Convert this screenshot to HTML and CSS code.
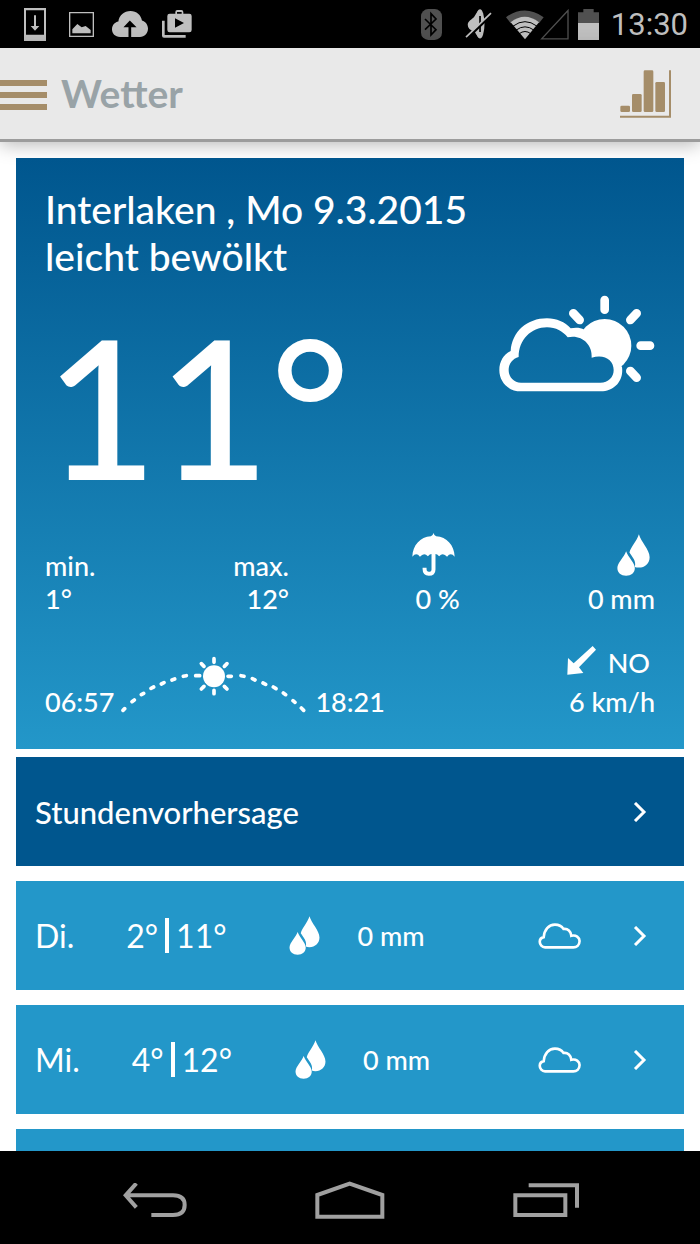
FILE: index.html
```html
<!DOCTYPE html>
<html lang="de">
<head>
<meta charset="utf-8">
<meta name="viewport" content="width=device-width, initial-scale=1">
<title>Wetter</title>
<link rel="stylesheet" href="styles.css">
</head>
<body>
<svg class="defs" width="0" height="0" aria-hidden="true">
  <symbol id="drops" viewBox="743 43 98 125">
    <path d="M808 44C814 66 840 90 840 112C840 130 826 143 808 143C803 143 799 142 796 141C801 124 789 112 780 98C784 82 802 64 808 44Z"/>
    <path d="M770 94C776 112 796 128 796 144C796 158 785 167 770 167C755 167 744 158 744 144C744 128 764 112 770 94Z"/>
  </symbol>
  <symbol id="cloud" viewBox="565 162 130 79">
    <path d="M582 205C584 182 597 167 616 167C628 167 637 172 642 180C655 178 665 187 666 201C680 197 691 206 691 217C691 229 682 236 672 236H586C577 236 570 228 570 219C570 212 574 207 582 205Z" fill="none" stroke="#fff" stroke-width="8"/>
  </symbol>
  <symbol id="chevron" viewBox="0 0 14 20">
    <path d="M2 1L11 10L2 19" fill="none" stroke="#fff" stroke-width="3"/>
  </symbol>
</svg>

<div class="statusbar">
  <div class="notifications">
    <svg width="22" height="33" viewBox="72 24 66 99"><path d="M72 24H138V123H72ZM78 31V104H132V31Z" fill-rule="evenodd"/><path d="M102 46H108V78H118L105 92L92 78H102Z"/></svg>
    <svg width="25" height="25" viewBox="207 36 75 75"><path d="M207 36H282V111H207ZM211 40V107H278V40Z" fill-rule="evenodd"/><path d="M217 100V88L232 72L245 82L257 78L272 90V100Z"/></svg>
    <svg width="36" height="26" viewBox="332 36 107 77"><path d="M356 113C341 113 332 102 332 90C332 78 340 69 351 67C353 49 368 36 387 36C405 36 418 48 421 64C432 67 439 77 439 88C439 102 429 113 415 113H389V84H405L385 64L366 84H381V113Z"/></svg>
    <svg width="30" height="28" viewBox="481 34 90 84"><path d="M481 66H489V109H552V117H487Q481 117 481 111Z"/><path d="M504 45H521V40Q521 34 527 34H539Q545 34 545 40V45H563Q570 45 570 52V94Q570 101 563 101H504Q497 101 497 94V52Q497 45 504 45ZM526 45H540V40H526ZM520 59V87L547 73Z" fill-rule="evenodd"/></svg>
  </div>
  <div class="system">
    <svg width="21" height="31" viewBox="65 24 63 93"><rect x="65" y="24" width="63" height="93" rx="22" fill="#505050"/><path d="M77 54L110 86L95 102V38L110 54L77 86" fill="none" stroke="#000" stroke-width="5"/></svg>
    <svg class="mute" width="27" height="30" viewBox="198 27 79 87"><path d="M206 73C206 60 219 57 225 49L238 28V112L226 93Q206 88 206 73Z"/><ellipse cx="242" cy="70" rx="13" ry="43"/><path d="M242 47V94" stroke="#000" stroke-width="5"/><path d="M201 115L274 45" stroke="#000" stroke-width="8"/><path d="M201 109L274 39" stroke="#bfbfbf" stroke-width="5"/></svg>
    <svg width="63" height="31" viewBox="318 24 189 92"><path d="M318 48Q374 8 431 48L417 66Q374 36 332 66Z" fill="#505050"/><path d="M332 63Q374 30 417 63L375 114Z"/><path d="M339 75Q375 48 411 75M348 87Q375 67 402 87M357 98Q375 84 393 98" fill="none" stroke="#000" stroke-width="3"/><path d="M425 113H504V28Z" fill="none" stroke="#505050" stroke-width="4"/></svg>
    <svg class="battery" width="21" height="31" viewBox="534 24 63 93"><path d="M534 34H550V24H581V34H597V70H534Z" fill="#505050"/><path d="M534 66H597V117H534Z"/></svg>
    <time class="clock">13:30</time>
  </div>
</div>

<header class="appbar">
  <button class="menu" type="button" aria-label="Menü"><span></span><span></span><span></span></button>
  <h1 class="title">Wetter</h1>
  <button type="button" aria-label="Diagramm">
    <svg class="chart" width="51" height="48" viewBox="660 213 153 144"><rect x="661" y="320" width="29" height="19" rx="4"/><rect x="696" y="285" width="29" height="54" rx="4"/><rect x="731" y="214" width="29" height="125" rx="4"/><rect x="766" y="249" width="29" height="90" rx="4"/><path d="M807 214H813V356H660V350H807Z"/></svg>
  </button>
</header>

<main class="content">
  <section class="current">
    <h2 class="place">Interlaken , Mo 9.3.2015<br>leicht bewölkt</h2>
    <div class="hero">
      <div class="temperature">11°</div>
      <svg width="156" height="97" viewBox="59 46 468 291" role="img" aria-label="leicht bewölkt">
        <mask id="cloud-hole" maskUnits="userSpaceOnUse" x="59" y="46" width="468" height="291">
          <rect x="59" y="46" width="468" height="291" fill="#fff"/>
          <path fill="#000" d="M118 232C118 181 155 143 203 143C229 143 251 155 265 173C304 163 340 192 337 234C375 222 403 241 403 271C403 293 387 309 363 309H125C104 309 88 293 88 271C88 252 100 237 118 232Z"/>
        </mask>
        <g mask="url(#cloud-hole)"><circle cx="376" cy="198" r="80"/><path d="M94 214C98 156 143 116 203 116C232 116 257 127 274 146C290 143 303 144 315 150L376 198L428 262C434 305 403 335 365 335H125C85 335 60 305 60 272C60 245 73 225 94 214Z"/></g>
        <path d="M376 61V90M282 101L301 121M472 101L453 121M484 198H512M453 274L472 294" stroke="#fff" stroke-width="26" stroke-linecap="round"/>
      </svg>
    </div>
    <div class="stats">
      <div class="stat"><span>min.</span><span>1°</span></div>
      <div class="stat"><span>max.</span><span>12°</span></div>
      <div class="stat">
        <svg width="43" height="43" viewBox="129 39 130 130" role="img" aria-label="Regenrisiko"><path d="M194 39Q196 47 202 49C234 51 257 76 258 111Q246 96 235 111Q223 96 211 109Q203 100 194 104Q185 100 177 109Q165 96 153 111Q142 96 130 111C131 76 154 51 186 49Q192 47 194 39Z"/><path d="M194 100V149Q194 162 180 162Q167 162 167 148V144" fill="none" stroke="#fff" stroke-width="12"/></svg>
        <span>0 %</span>
      </div>
      <div class="stat">
        <svg width="33" height="42" role="img" aria-label="Niederschlag"><use href="#drops"/></svg>
        <span>0 mm</span>
      </div>
    </div>
    <div class="sky">
      <div class="sun">
        <span>06:57</span>
        <svg width="187" height="57" viewBox="271 408 561 171" aria-hidden="true"><path d="M280 571L285 566M307 545L314 540M335 524L342 520M364 505L372 501M395 492L403 488M427 480L435 477M461 469L470 467M498 467H510M595 469H605M634 467L643 469M668 476L676 480M700 489L708 493M731 501L739 506M761 519L768 524M790 542L796 547M815 564L822 571" fill="none" stroke="#fff" stroke-width="11" stroke-linecap="round"/><path d="M553 416V427M553 511V521M515 431L523 439M592 431L584 439M515 507L523 499M592 507L584 499" stroke="#fff" stroke-width="11" stroke-linecap="round"/><circle cx="553" cy="469" r="33"/></svg>
        <span>18:21</span>
      </div>
      <div class="wind">
        <span class="direction"><svg width="29" height="29" viewBox="584 375 87 87" aria-hidden="true"><path d="M661 375L671 386L620 439L633 456L585 461L587 411L604 427Z"/></svg>NO</span>
        <span>6 km/h</span>
      </div>
    </div>
  </section>

  <a class="row hourly" href="#stunden">Stundenvorhersage<svg class="chevron" width="14" height="20" aria-hidden="true"><use href="#chevron"/></svg></a>

  <div class="days">
    <a class="row" href="#di">
      <span>Di.</span>
      <span class="range"><span>2°</span><span class="bar"></span><span>11°</span></span>
      <svg class="drops" width="31" height="39" aria-hidden="true"><use href="#drops"/></svg>
      <span class="rain">0 mm</span>
      <svg class="cloud" width="43" height="26" aria-hidden="true"><use href="#cloud"/></svg>
      <svg class="chevron" width="14" height="20" aria-hidden="true"><use href="#chevron"/></svg>
    </a>
    <a class="row" href="#mi">
      <span>Mi.</span>
      <span class="range"><span>4°</span><span class="bar"></span><span>12°</span></span>
      <svg class="drops" width="31" height="39" aria-hidden="true"><use href="#drops"/></svg>
      <span class="rain">0 mm</span>
      <svg class="cloud" width="43" height="26" aria-hidden="true"><use href="#cloud"/></svg>
      <svg class="chevron" width="14" height="20" aria-hidden="true"><use href="#chevron"/></svg>
    </a>
    <div class="row"></div>
  </div>
</main>

<nav class="navbar">
  <button type="button" aria-label="Zurück"><svg width="64" height="34" viewBox="98 189 192 102"><path d="M104 226H248Q283 226 283 255Q283 285 248 285H183M138 190L106 226L138 262" fill="none" stroke="#a0a0a0" stroke-width="12"/></svg></button>
  <button type="button" aria-label="Startseite"><svg width="70" height="38" viewBox="665 178 210 114"><path d="M672 285V220L769 186L867 220V285Z" fill="none" stroke="#a0a0a0" stroke-width="12"/></svg></button>
  <button type="button" aria-label="Letzte Apps"><svg width="66" height="34" viewBox="1251 189 198 102"><path d="M1258 226H1408V285H1258ZM1298 196H1443V263" fill="none" stroke="#a0a0a0" stroke-width="12"/></svg></button>
</nav>
</body>
</html>
```
FILE: styles.css
```css
* {
  box-sizing: border-box;
}

body {
  margin: 0;
  height: 100vh;
  display: flex;
  flex-direction: column;
  overflow: hidden;
  background: #fff;
  color: #fff;
  font-family: Lato, "Liberation Sans", sans-serif;
  font-size: 27px;
  line-height: 33px;
  font-weight: 500;
}

svg {
  display: block;
  flex: none;
  fill: #fff;
}

.defs {
  position: absolute;
}

button {
  padding: 0;
  border: 0;
  background: none;
  cursor: pointer;
}

.statusbar {
  flex: none;
  height: 48px;
  padding: 0 12px 0 24px;
  display: flex;
  align-items: center;
  justify-content: space-between;
  background: #000;
}

.statusbar svg {
  fill: #bfbfbf;
}

.notifications {
  display: flex;
  align-items: center;
  gap: 18px;
}

.notifications svg:nth-child(2) {
  margin-left: 5px;
}

.notifications svg:nth-child(4) {
  margin-left: -4px;
}

.system {
  display: flex;
  align-items: center;
}

.mute {
  margin: 0 14px 0 23px;
}

.battery {
  margin: 0 12px 0 9px;
}

.clock {
  padding-top: 2px;
  color: #bfbfbf;
  font: 400 31px/46px Roboto, sans-serif;
}

.appbar {
  flex: none;
  height: 94px;
  padding-right: 29px;
  display: flex;
  align-items: center;
  background: #e9e9e9;
  border-bottom: 3px solid #9c9c9c;
  box-shadow: 0 2px 18px rgba(0, 0, 0, 0.3);
}

.menu {
  width: 47px;
  padding-top: 2px;
  display: grid;
  gap: 6px;
}

.menu span {
  height: 6px;
  background: #a58d69;
}

.chart {
  fill: #a58d69;
}

.title {
  margin: 0 auto 0 14px;
  color: #99a3a7;
  font-size: 39px;
  line-height: 47px;
  font-weight: 700;
}

.content {
  flex: 1;
  min-height: 0;
  overflow: hidden;
  padding: 16px 16px 0;
}

.current {
  padding: 28px 29px 31px;
  background: linear-gradient(#00568e, #2397c9);
}

.place {
  margin: 0;
  font-size: 39px;
  line-height: 47px;
  font-weight: 500;
}

.hero {
  margin-top: 15px;
  display: flex;
  justify-content: space-between;
  align-items: flex-start;
}

.temperature {
  margin-top: 13px;
  font-size: 194px;
  line-height: 194px;
}

.stats {
  margin-top: 31px;
  display: grid;
  grid-template-columns: 20fr 20fr 28fr 32fr;
  align-items: end;
}

.stat {
  display: flex;
  flex-direction: column;
  align-items: flex-end;
}

.stat:first-child {
  align-items: flex-start;
}

.stat svg {
  margin: 0 5px 6px 0;
}

.sky {
  margin-top: 31px;
  display: flex;
  justify-content: space-between;
  align-items: flex-end;
}

.sun {
  display: flex;
  align-items: flex-end;
}

.sun svg {
  margin: 0 8px 5px 6px;
}

.wind {
  display: flex;
  flex-direction: column;
  align-items: flex-end;
  gap: 6px;
}

.direction {
  display: flex;
  align-items: flex-start;
  gap: 12px;
  padding-right: 5px;
}

.row {
  height: 109px;
  padding: 0 37px 0 19px;
  display: flex;
  align-items: center;
  background: #2397c9;
  color: #fff;
  font-size: 32px;
  line-height: 38px;
  font-weight: 400;
  text-decoration: none;
}

.hourly {
  margin: 8px 0 15px;
  background: #00568e;
  font-size: 31px;
  font-weight: 500;
}

.days {
  display: grid;
  gap: 15px;
}

.range {
  margin-left: 52px;
  display: flex;
  align-items: center;
  gap: 7px;
}

.bar {
  width: 4px;
  height: 35px;
  background: #fff;
}

.drops {
  margin-left: 63px;
}

.rain {
  margin-left: 37px;
  font-size: 27px;
  font-weight: 500;
}

.cloud {
  margin: 0 52px 0 auto;
}

.hourly .chevron {
  margin-left: auto;
}

.navbar {
  flex: none;
  height: 93px;
  padding: 4px 105px 0 107px;
  display: flex;
  align-items: center;
  justify-content: space-between;
  background: #000;
}

.navbar button {
  padding: 8px 16px;
}
```
